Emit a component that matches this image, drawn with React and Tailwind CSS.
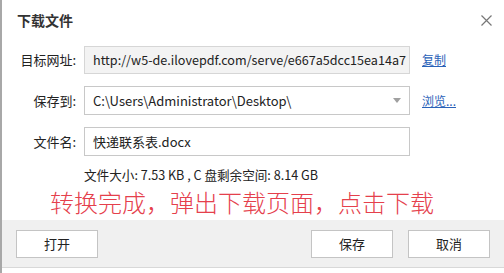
export default function App() {
  const font = { fontFamily: '"Noto Sans CJK SC", "Noto Sans", sans-serif' };
  return (
    <div className="w-[504px] h-[273px] bg-white border-l-2 border-[#a8a8a8] flex flex-col text-[#222]" style={font}>
      <div className="h-[40px] flex items-center justify-between pl-[15px] pr-[12px]">
        <span className="text-[14px] font-bold text-[#333]">下载文件</span>
        <svg className="w-[11px] h-[11px]" viewBox="0 0 11 11" stroke="#777" strokeWidth="1.2">
          <path d="M0.5 0.5L10.5 10.5M10.5 0.5L0.5 10.5" />
        </svg>
      </div>
      <div className="flex flex-col gap-[12px] pt-[6px]">
        <div className="flex items-center">
          <span className="w-[74px] text-right text-[13px]">目标网址:</span>
          <div className="ml-[8px] w-[326px] h-[28px] bg-[#f3f3f3] border border-[#d6d6d6] flex items-center pl-[8px] overflow-hidden whitespace-nowrap text-[12.6px]">
            http://w5-de.ilovepdf.com/serve/e667a5dcc15ea14a7
          </div>
          <span className="ml-[12px] text-[12px] text-[#2a62b8] underline">复制</span>
        </div>
        <div className="flex items-center">
          <span className="w-[74px] text-right text-[13px]">保存到:</span>
          <div className="ml-[8px] w-[326px] h-[29px] bg-white border border-[#c8c8c8] flex items-center justify-between pl-[8px] pr-[8px] text-[13px]">
            <span>C:\Users\Administrator\Desktop\</span>
            <svg className="w-[8px] h-[5px]" viewBox="0 0 8 5"><path d="M0 0H8L4 5Z" fill="#a0a0a0" /></svg>
          </div>
          <span className="ml-[12px] text-[12px] text-[#2a62b8] underline">浏览...</span>
        </div>
        <div className="flex items-center">
          <span className="w-[74px] text-right text-[13px]">文件名:</span>
          <div className="ml-[8px] w-[326px] h-[29px] bg-white border border-[#c8c8c8] flex items-center pl-[8px] text-[13px]">
            快递联系表.docx
          </div>
        </div>
      </div>
      <div className="pl-[82px] pt-[11px] text-[12.6px] leading-[16px]">文件大小: 7.53 KB , C 盘剩余空间: 8.14 GB</div>
      <div className="pl-[48px] mt-[3px] text-[24px] leading-[32px] font-light text-[#e5404c]">转换完成，弹出下载页面，点击下载</div>
      <div className="mt-auto h-[48px] bg-[#f0f0f0] border-b border-[#d8d8d8] mb-[5px] flex items-center px-[14px]">
        <button className="w-[82px] h-[28px] bg-white border border-[#c4c4c4] text-[13px]">打开</button>
        <button className="ml-auto w-[82px] h-[28px] bg-white border border-[#c4c4c4] text-[13px]">保存</button>
        <button className="ml-[15px] w-[82px] h-[28px] bg-white border border-[#c4c4c4] text-[13px]">取消</button>
      </div>
    </div>
  );
}
